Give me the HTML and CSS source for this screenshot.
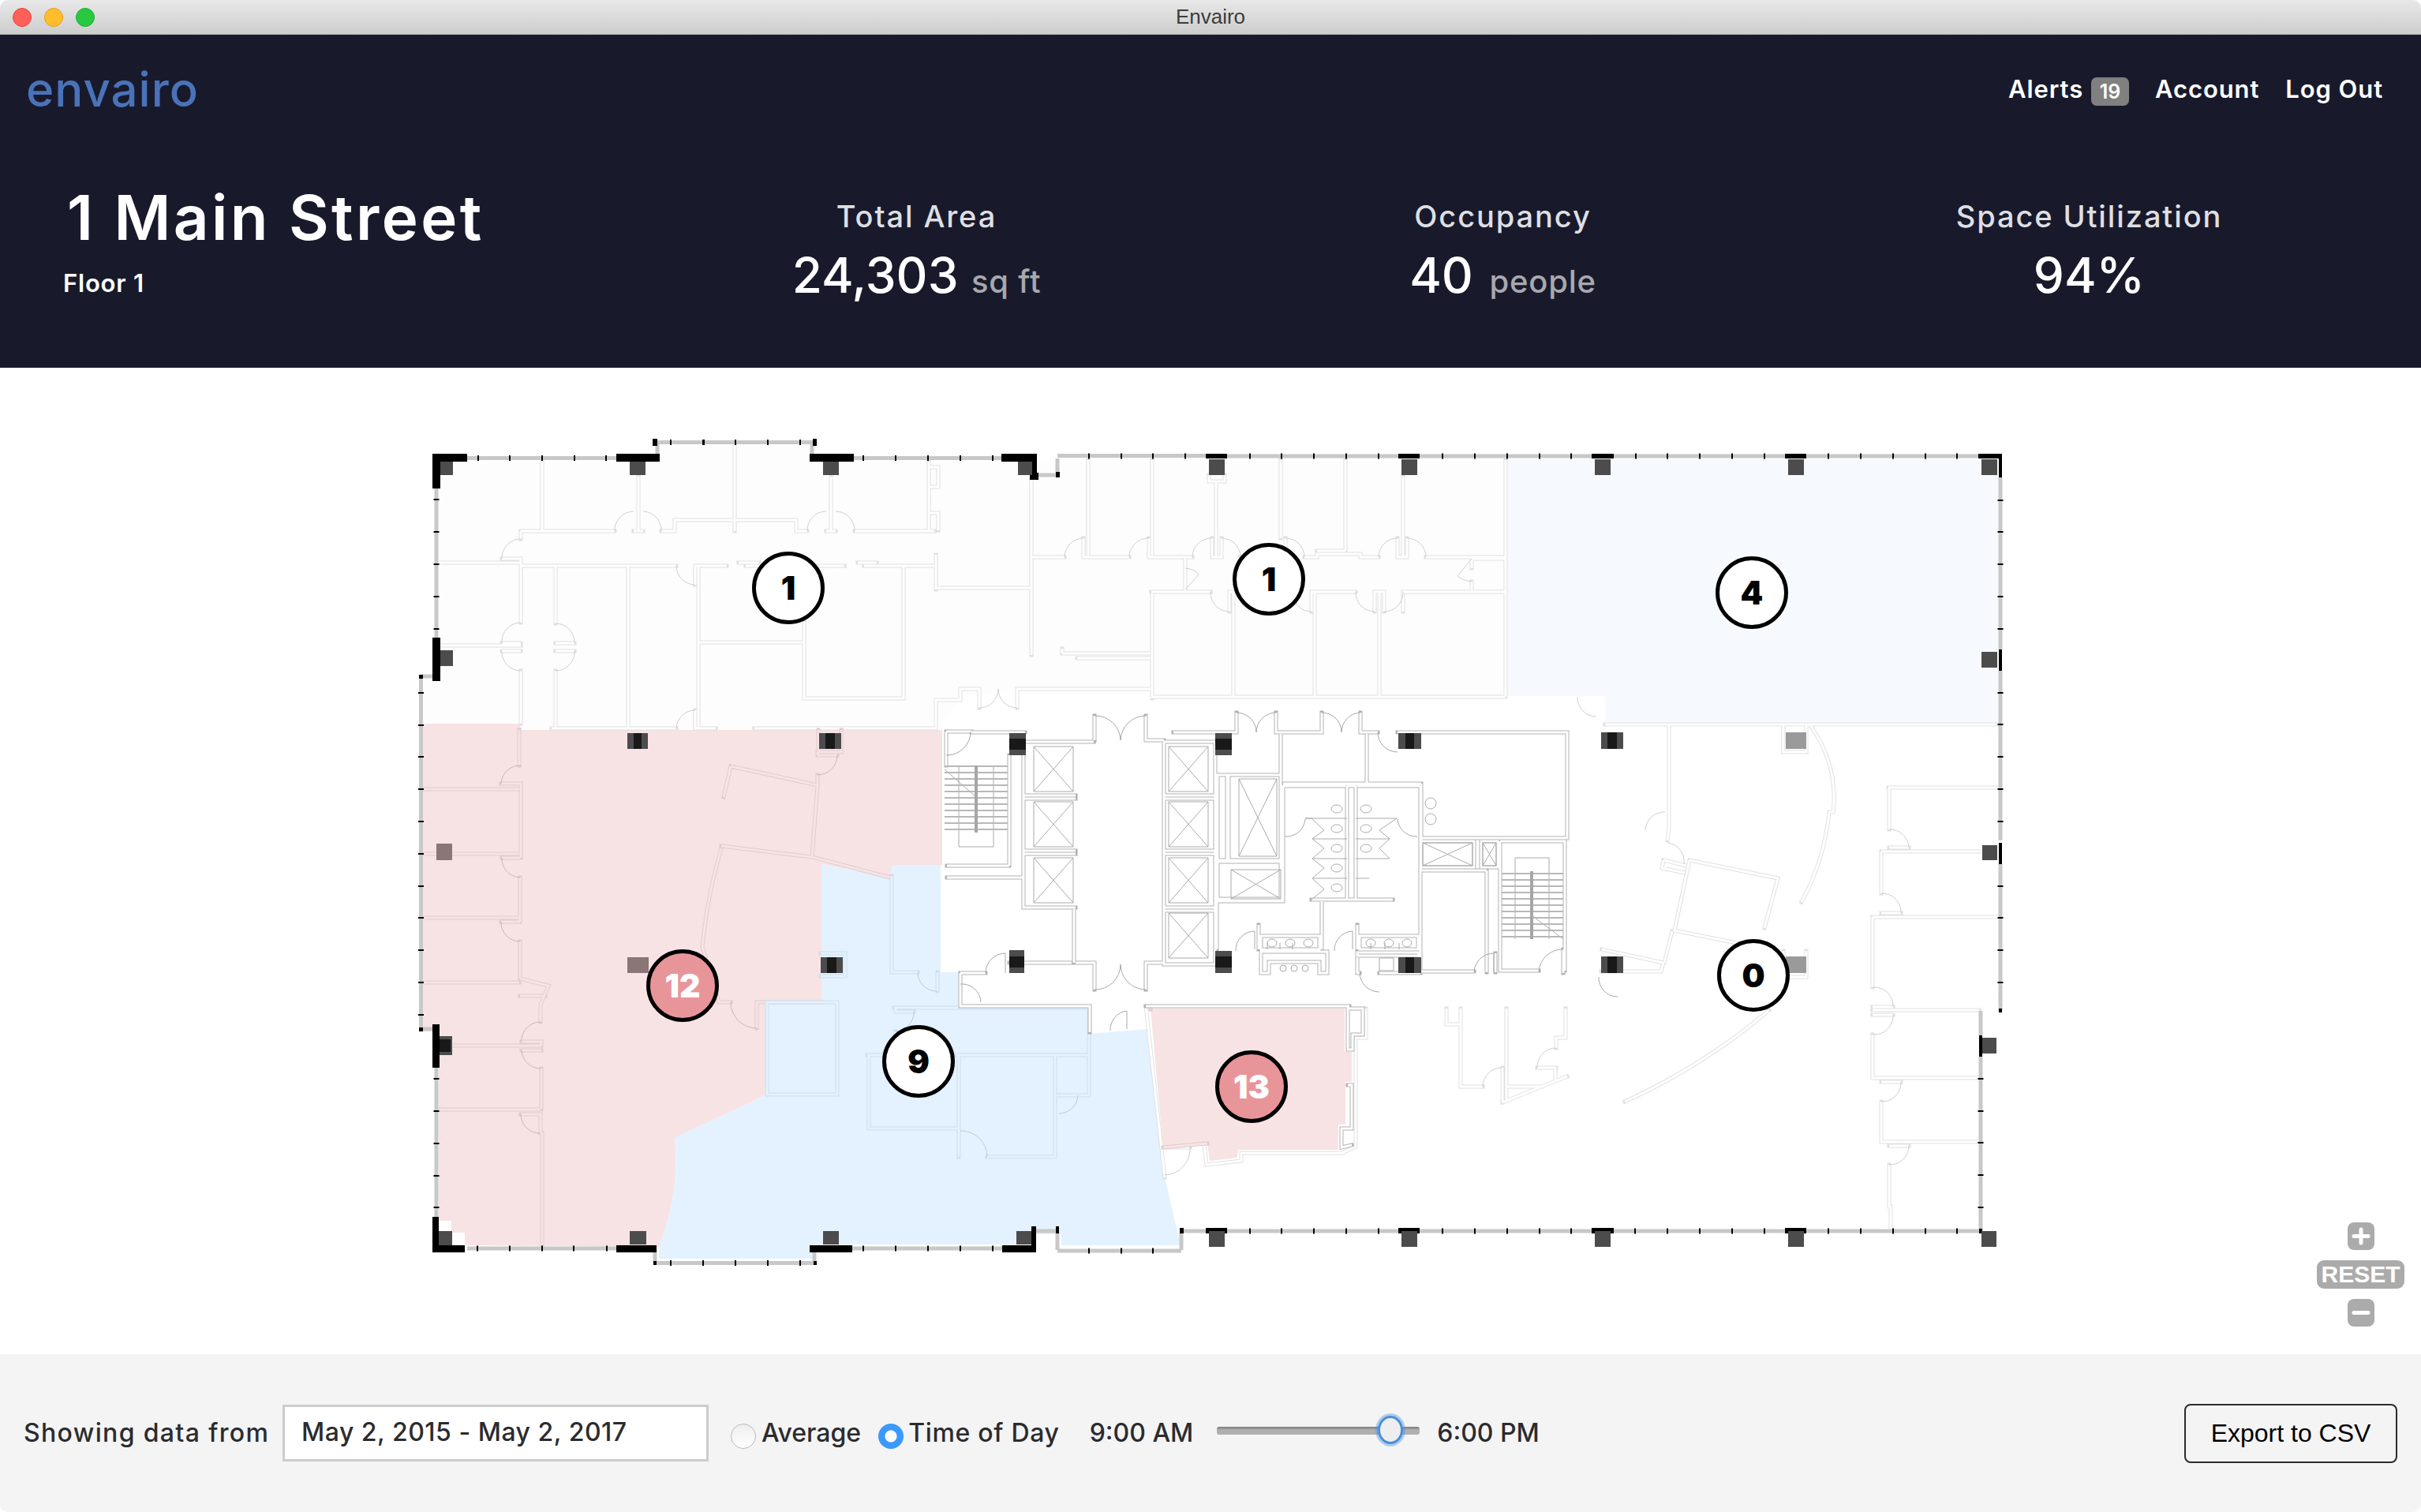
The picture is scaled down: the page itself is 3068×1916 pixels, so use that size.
FILE: index.html
```html
<!DOCTYPE html>
<html lang="en">
<head>
<meta charset="utf-8">
<title>Envairo</title>
<link rel="stylesheet" href="styles.css">
</head>
<body>
<div class="window">
  <div class="titlebar">
    <div class="lights"><span class="light red"></span><span class="light amber"></span><span class="light green"></span></div>
    <div class="window-title">Envairo</div>
  </div>
  <header class="header">
    <div class="topbar">
      <div class="logo">envairo</div>
      <nav class="nav">
        <a class="nav-item">Alerts <span class="badge">19</span></a>
        <a class="nav-item">Account</a>
        <a class="nav-item">Log Out</a>
      </nav>
    </div>
    <div class="summary">
      <div class="place">
        <h1 class="place-name">1 Main Street</h1>
        <div class="place-floor">Floor 1</div>
      </div>
      <div class="stat"><div class="stat-label">Total Area</div><div class="stat-value">24,303 <span class="unit">sq ft</span></div></div>
      <div class="stat"><div class="stat-label">Occupancy</div><div class="stat-value">40 <span class="unit unit-gap">people</span></div></div>
      <div class="stat"><div class="stat-label">Space Utilization</div><div class="stat-value">94%</div></div>
    </div>
  </header>
  <main class="map">
    <svg class="plan" viewBox="0 466 3068 1250" width="3068" height="1250" xmlns="http://www.w3.org/2000/svg">
      <defs>
        <path id="w-light" d="M687 583V672M660 673H779M809 604V673M803 673H815M838 673H855V659H1009V673H1023M931 563V673M1053 604V673M1047 673H1059M1083 673H1184M1177 585V673M1177 592H1189V617H1177M1177 650H1189V672M660 673V683M636 708H660V789M636 815H660M636 825H660M660 850V917M555 713H660M660 717H857M881 741V717H921M936 713H962M945 717H1070M1087 713H1111M1095 717H1184M1186 703V747M1186 745H1307M1307 608V830M704 717V790M704 815H728M704 825H728M704 850V923M558 818H660M796 717V923M885 717V923M885 814H1019M1019 788V885H1145V717M699 923H857M881 900V923H907M956 923H1186V887H1217V873H1241V897M1289 897V873H1459M1308 706H1349M1373 682V706H1431M1456 682V706H1511M1379 583V706M1460 583V706M1536 682V706H1548V682M1541 610V706M1532 602V610H1552V602M1572 706H1623M1623 583V682M1629 682V706M1653 706H1669V702H1724V706H1747M1669 698H1705M1705 583V698M1771 682V706H1783V682M1778 604V706M1807 706H1908M1459 750H1502V707M1502 750H1534M1558 775V750H1640M1563 750V883M1662 775V750H1718M1666 750V883M1742 775V750H1754V775M1748 750V883M1778 775V750H1865V737M1865 720V708H1908M1865 750H1908M1460 752V885M1461 883H1908M1346 828H1458M1365 834H1458M1908 583V883M1346 822V828M1290 745H1305M2034 918H2532M2115 918V1051L2113 1065M2141 1090L2253 1113L2236 1176M2141 1090L2122 1179L2205 1196M2108 1090L2137 1097M2108 1090L2106 1100L2135 1106M2119 1180L2109 1220M2030 1203L2108 1220L2105 1231H2029M2393 998H2533M2394 998V1051M2394 1074H2419M2384 1079H2512M2384 1079V1132M2384 1157H2409M2373 1162H2533M2373 1162V1251M2373 1276H2399M2373 1280H2508M2373 1286H2399M2373 1311V1366H2508M2384 1371H2409M2384 1396V1447H2508M2394 1452H2419M2394 1476V1529H2396V1559M2294 919Q2330 970 2323 1029H2318Q2312 1090 2283 1143M2242 1280Q2160 1350 2059 1396M2260 919V953H2289V919M2260 1205V1238H2289V1205M1476 1454H1508M1526 1449L1529 1476L1573 1471V1461H1701L1718 1453V1315H1731V1278M1833 1278V1298H1850M1851 1278V1377H1879M1904 1353V1397M1909 1278V1393M1909 1377H1953M1904 1397L1986 1364M1971 1353V1368M1948 1353H1972M1972 1328V1315H1984V1278M1452 1275L1476 1492"/>
        <path id="w-pink" d="M536 1000H658M658 925V970M635 993H660V1087M536 1082H658M636 1087H659M659 1112V1168M635 1168H659M659 1193V1240M536 1163H658M536 1245H658M659 1240L695 1249L685 1273V1295M659 1262H691M661 1320H686V1325M557 1325H686M661 1331H686M686 1354V1405M554 1406H685M660 1412H685V1436H687V1578M914 1075Q898 1130 892 1182L890 1200L911 1270H926M959 1303V1270H1041M926 971L1036 995L1029 1086L914 1072M926 971L917 1010M1036 957H1061M1036 953V957M1036 982V995M1037 925V953H1066V925M1029 1086L1128 1112M1458 1278V1279M1530 1449L1474 1454"/>
        <path id="w-blue" d="M972 1270H1061V1387H972ZM1130 1110V1232H1163M1188 1232V1256M1133 1277H1380V1388H1339M1135 1277V1282H1158M1135 1307V1320M1211 1337H1380M1099 1337H1122M1101 1337V1430H1214M1215 1338V1466M1251 1466H1337V1338M1040 1208H1071V1237H1040"/>
        <path id="w-core" d="M1199 927V970M1217 1233V1275H1381V1308M1231 928H1299M1199 927H1231M1297 940V1150H1363M1297 1008H1363M1297 1012H1363M1297 1078H1363M1297 1082H1363M1297 940H1386M1279 957V1097M1200 1097H1279M1200 1112H1297M1361 1152V1220M1279 1220H1358M1217 1233H1249M1363 1220H1387V1254M1452 1254V1220H1475M1387 907V938M1452 907V938H1475M1475 940V1222H1540M1475 940H1540V1222M1475 1008H1540M1475 1012H1540M1475 1078H1540M1475 1082H1540M1475 1150H1540M1475 1154H1540M1487 928H1567V903M1617 903V928H1675V903M1724 903V928H1746M1623 930V982M1771 928H1986V1062H1801V1100M1626 993H1731M1732 930V993H1801M1557 982H1623V1090H1557ZM1543 982H1555V1090H1543ZM1543 1092H1623V1139H1543ZM1626 995V1142H1542V1203M1626 996H1705M1720 996H1799M1707 996H1718V1140H1707ZM1662 1140H1765M1675 1142V1203M1801 1062V993M1800 996V1233M1884 1103V1232M1801 1103H1884M1801 1066H1868V1099H1801ZM1877 1066H1898V1099H1877ZM1901 1066H1983V1230M1901 1066V1230H1950M1801 1231H1868M1895 1208V1232M1981 1203V1233M1598 1186H1672V1203H1598ZM1723 1186H1797V1203H1723ZM1595 1172V1203M1720 1172V1203M1598 1206H1682V1233H1672V1219H1608V1233H1598ZM1720 1207H1798V1211H1720ZM1720 1213V1233H1723M1748 1233H1800M1452 1275H1710M1708 1278H1727V1311H1714V1330H1708ZM1708 1375H1713V1430H1700V1454L1713 1451"/>
      </defs>

      <polygon class="zone zone-pale" points="536,917 536,860 558,860 558,585 830,585 830,565 1030,565 1030,585 1910,585 1910,883 1459,883 1459,873 1289,873 1217,885 1186,925 658,925"/>
      <polygon class="zone zone-ice" points="1910,582 2532,582 2532,916 2034,916 2034,882 1910,882"/>
      <path class="zone zone-pink" d="M536 917H658L661 925H1194V1096H1131L1128 1112L1041 1095V1270H972V1387L855 1442Q862 1510 835 1580L589 1578V1562H572V1547H556V1353H548V1307H536ZM1458 1278H1704V1333H1713V1371H1705V1425H1696V1457H1569L1568 1467L1533 1471L1530 1449L1474 1454Z"/>
      <path class="zone zone-blue" d="M1041 1095L1128 1112L1131 1096H1192V1232H1217V1275H1380V1310L1455 1304L1476 1492L1496 1578H1345V1564H1313V1577H1030V1595H835V1580Q862 1510 855 1442L972 1387V1270H1041Z"/>

      <use href="#w-light" class="wall-out wall-out-light"/><use href="#w-light" class="wall-in"/>
      <use href="#w-pink" class="wall-out wall-out-pink"/><use href="#w-pink" class="wall-in wall-in-pink"/>
      <use href="#w-blue" class="wall-out wall-out-blue"/><use href="#w-blue" class="wall-in wall-in-blue"/>
      <use href="#w-core" class="wall-out wall-out-core"/><use href="#w-core" class="wall-in"/>

      <path class="door door-light" d="M779 673A24 24 0 0 1 803 648M815 648A24 24 0 0 1 838 673M1023 673A24 24 0 0 1 1047 648M1059 648A24 24 0 0 1 1083 673M660 683A24 24 0 0 0 636 708M857 717A24 24 0 0 0 880 741M660 789A24 24 0 0 0 636 815M636 825A24 24 0 0 0 660 850M704 790A24 24 0 0 1 728 815M728 825A24 24 0 0 1 704 850M857 923A24 24 0 0 1 881 900M1241 897A24 24 0 0 0 1265 873M1289 897A24 24 0 0 1 1265 873M1349 706A24 24 0 0 1 1373 682M1431 706A24 24 0 0 1 1456 682M1511 706A24 24 0 0 1 1536 682M1548 682A24 24 0 0 1 1572 706M1629 682A24 24 0 0 1 1653 706M1747 706A24 24 0 0 1 1771 682M1783 682A24 24 0 0 1 1807 706M1534 750A24 24 0 0 0 1558 775M1638 750A24 24 0 0 0 1662 775M1718 750A24 24 0 0 0 1742 775M1754 775A24 24 0 0 0 1778 750M1502 720Q1516 722 1519 728L1502 747M1865 708L1847 730Q1852 735 1865 737M2085 1052A24 24 0 0 1 2110 1029M2114 1068A24 24 0 0 1 2134 1095M2394 1051A24 24 0 0 1 2419 1074M2384 1132A24 24 0 0 1 2409 1157M2373 1251A24 24 0 0 1 2399 1276M2399 1286A24 24 0 0 1 2373 1311M2409 1371A24 24 0 0 1 2384 1396M2419 1452A24 24 0 0 1 2394 1476M1879 1377A24 24 0 0 1 1903 1353M1948 1353A24 24 0 0 1 1972 1328M1476 1489A33 33 0 0 0 1508 1453M1999 883A24 24 0 0 0 2023 908"/>
      <path class="door door-core" d="M1199 957A30 30 0 0 0 1230 927M1387 907A32 32 0 0 1 1420 938M1452 907A32 32 0 0 0 1420 938M1387 1254A32 32 0 0 0 1420 1222M1452 1254A32 32 0 0 1 1420 1222M1567 903A25 25 0 0 1 1592 928M1617 903A25 25 0 0 0 1592 928M1675 903A25 25 0 0 1 1700 928M1724 903A25 25 0 0 0 1700 928M1746 928A25 25 0 0 0 1771 953M1628 1060A24 24 0 0 0 1654 1038M1771 1038A24 24 0 0 0 1796 1060M1249 1233A25 25 0 0 1 1274 1208M1217 1247A24 24 0 0 1 1243 1270M1407 1306A24 24 0 0 1 1428 1281M1566 1205A24 24 0 0 1 1590 1180M1691 1205A24 24 0 0 1 1714 1180M1723 1233A25 25 0 0 0 1748 1257M1868 1231A25 25 0 0 1 1893 1208M1950 1232A30 30 0 0 1 1981 1203M2026 1238A24 24 0 0 0 2050 1263M1274 1208V1233M1428 1281V1304M1714 1180V1203M1590 1180V1203M1893 1208V1232"/>
      <path class="door door-pink" d="M660 970A24 24 0 0 0 635 993M636 1087A24 24 0 0 0 659 1112M635 1168A24 24 0 0 0 659 1193M686 1295A24 24 0 0 0 661 1320M661 1331A24 24 0 0 0 686 1354M660 1412A24 24 0 0 0 685 1436M926 1270A33 33 0 0 0 959 1303M1061 957A25 25 0 0 1 1036 982"/>
      <path class="door door-blue" d="M1163 1233A24 24 0 0 0 1187 1256M1158 1282A24 24 0 0 1 1135 1307M1217 1433A33 33 0 0 1 1251 1465M1366 1388A24 24 0 0 1 1342 1411"/>

      <path class="fixture" d="M1310 946H1360V1003H1310ZM1310 946L1360 1003M1360 946L1310 1003M1310 1016H1360V1073H1310ZM1310 1016L1360 1073M1360 1016L1310 1073M1310 1087H1360V1144H1310ZM1310 1087L1360 1144M1360 1087L1310 1144M1481 946H1531V1003H1481ZM1481 946L1531 1003M1531 946L1481 1003M1481 1016H1531V1073H1481ZM1481 1016L1531 1073M1531 1016L1481 1073M1481 1087H1531V1144H1481ZM1481 1087L1531 1144M1531 1087L1481 1144M1481 1157H1531V1214H1481ZM1481 1157L1531 1214M1531 1157L1481 1214M1570 987H1618V1085H1570ZM1570 987L1618 1085M1618 987L1570 1085M1560 1102H1623V1139H1560ZM1560 1102L1623 1139M1623 1102L1560 1139M1803 1068H1866V1097H1803ZM1803 1068L1866 1097M1866 1068L1803 1097M1879 1068H1896V1097H1879ZM1879 1068L1896 1097M1896 1068L1879 1097M1215 1055V1073H1259V1055M1920 1106V1087H1963V1106M1654 1037H1707M1718 1037H1770M1663 1063H1707M1718 1063H1761M1663 1088H1707M1718 1088H1761M1663 1113H1707M1718 1113H1735M1654 1037L1662 1037L1678 1052L1663 1063L1678 1075L1663 1088L1678 1100L1663 1113L1678 1127L1661 1141M1770 1037L1748 1052L1761 1063L1748 1075L1761 1088M1606 1195V1203M1622 1195V1203M1638 1195V1203M1737 1195V1203M1755 1195V1203M1773 1195V1203M1748 1214H1766V1230H1748ZM1197 975L1237 1010M1215 970V1055M1259 970V1055M1920 1106V1190M1963 1106V1190M1941 1160L1981 1190"/>
      <g class="fixture">
        <ellipse cx="1694" cy="1025" rx="7" ry="5"/><ellipse cx="1694" cy="1050" rx="7" ry="5"/><ellipse cx="1694" cy="1075" rx="7" ry="5"/><ellipse cx="1694" cy="1100" rx="7" ry="5"/><ellipse cx="1694" cy="1125" rx="7" ry="5"/>
        <ellipse cx="1731" cy="1025" rx="7" ry="5"/><ellipse cx="1731" cy="1050" rx="7" ry="5"/><ellipse cx="1731" cy="1075" rx="7" ry="5"/>
        <ellipse cx="1813" cy="1018" rx="7" ry="7"/><ellipse cx="1813" cy="1038" rx="7" ry="7"/>
        <ellipse cx="1612" cy="1195" rx="6" ry="5"/><ellipse cx="1635" cy="1195" rx="6" ry="5"/><ellipse cx="1658" cy="1195" rx="6" ry="5"/>
        <ellipse cx="1737" cy="1195" rx="6" ry="5"/><ellipse cx="1760" cy="1195" rx="6" ry="5"/><ellipse cx="1783" cy="1195" rx="6" ry="5"/>
        <ellipse cx="1626" cy="1227" rx="4" ry="4"/><ellipse cx="1640" cy="1227" rx="4" ry="4"/><ellipse cx="1654" cy="1227" rx="4" ry="4"/>
      </g>
      <line class="treads treads-a" x1="1237" y1="970" x2="1237" y2="1055"/>
      <line class="treads treads-b" x1="1942" y1="1106" x2="1942" y2="1190"/>
      <path class="spine" d="M1237 970V1055M1941 1104V1190"/>

      <path class="win" d="M592 580.5H781M829 560.5H1032M1082 580.5H1269M1340 577.5H1528M1555 578H1772M1799 578H2017M2045 578H2262M2289 578H2507M553 619V808M533.5 860V1302M553 1353V1542M2535 605V823M2535 850V1065M2535 1095V1281M2510 1281V1312M2510 1339V1559M592 1582H781M1080 1582H1270M1340 1585H1497M2045 1560H2262M2289 1560H2508M1497 1560H2017M829 1600.5H1032M1340 581V600M1316 602H1340M833 563V576M1029 563V576M534 857H549M534 1304H549M1313 1560H1342M1340 1562V1584M1497 1562V1584M830 1583V1598M1032 1583V1598"/>
      <path class="tick tick-h" d="M605 580.5H607M645 580.5H647M686 580.5H688M727 580.5H729M767 580.5H769M849 560.5H851M890 560.5H893M931 560.5H933M972 560.5H974M1013 560.5H1015M1093 580.5H1095M1134 580.5H1136M1175 580.5H1177M1216 580.5H1218M1257 580.5H1259M1379 578H1381M1420 578H1422M1460 578H1462M1501 578H1503M1583 578H1585M1623 578H1625M1664 578H1666M1705 578H1707M1746 578H1748M1827 578H1829M1868 578H1870M1909 578H1911M1950 578H1952M1990 578H1992M2072 578H2074M2112 578H2114M2153 578H2155M2194 578H2196M2235 578H2237M2316 578H2318M2357 578H2359M2398 578H2400M2439 578H2441M2479 578H2481M1583 1560H1585M1623 1560H1625M1664 1560H1666M1705 1560H1707M1746 1560H1748M1827 1560H1829M1868 1560H1870M1909 1560H1911M1950 1560H1952M1990 1560H1992M2071 1560H2073M2112 1560H2114M2153 1560H2155M2194 1560H2196M2235 1560H2237M2316 1560H2318M2357 1560H2359M2398 1560H2400M2439 1560H2441M2479 1560H2481M604 1582H606M645 1582H647M686 1582H688M726 1582H728M768 1582H770M849 1600.5H851M890 1600.5H892M931 1600.5H933M972 1600.5H974M1013 1600.5H1015M1093 1582H1095M1134 1582H1136M1175 1582H1177M1216 1582H1218M1257 1582H1259M1379 1585H1381M1420 1585H1422M1460 1585H1462"/>
      <path class="tick tick-v" d="M553 632V634M553 673V675M553 714V716M553 755V757M553 796V798M533.5 877V879M533.5 918V920M533.5 958V960M533.5 999V1001M533.5 1040V1042M533.5 1081V1083M533.5 1122V1124M533.5 1162V1164M533.5 1203V1205M533.5 1244V1246M533.5 1285V1287M553 1366V1368M553 1407V1409M553 1448V1450M553 1489V1491M553 1529V1531M2535 633V635M2535 673V675M2535 714V716M2535 755V757M2535 796V798M2535 877V879M2535 917V919M2535 958V960M2535 999V1001M2535 1040V1042M2535 1122V1124M2535 1162V1164M2535 1203V1205M2535 1244V1246M2510 1366V1368M2510 1407V1409M2510 1447V1449M2510 1488V1490M2510 1529V1531"/>

      <g class="blocks">
        <path d="M548 575H592V585H558V619H548ZM781 575H836V585H781ZM1026 575H1082V585H1026ZM1269 575H1314V605H1305V585H1269ZM1305 599H1316V608H1305ZM1528 575H1555V581H1528ZM1772 575H1799V581H1772ZM2017 575H2045V581H2017ZM2262 575H2289V581H2262ZM2507 575H2537V605H2533V581H2507ZM548 808H558V863H548ZM548 1298H557V1353H548ZM548 1542H556V1578H589V1587H548ZM781 1578H832V1587H781ZM1026 1578H1080V1587H1026ZM1270 1578H1307V1554H1313V1587H1270ZM2533 823H2537V850H2533ZM2533 1068H2537V1095H2533ZM2508 1312H2512V1339H2508ZM2017 1556H2045V1563H2017ZM2262 1556H2289V1563H2262ZM1528 1556H1555V1563H1528ZM1772 1556H1799V1563H1772ZM827 556H833V565H827ZM1030 556H1035V565H1030ZM531 855H536V860H531ZM531 1302H536V1307H531ZM1338 1554H1342V1563H1338ZM1495 1556H1500V1563H1495ZM828 1598H832V1603H828ZM1031 1598H1035V1603H1031ZM2508 1557H2512V1563H2508ZM2533 1278H2537V1283H2533ZM1338 598H1343V605H1338Z"/>
      </g>

      <g class="col">
        <rect x="558" y="585" width="16" height="17"/><rect x="798" y="585" width="20" height="17"/><rect x="1043" y="585" width="20" height="17"/><rect x="1290" y="585" width="18" height="17"/><rect x="1532" y="582" width="20" height="20"/><rect x="1776" y="582" width="20" height="20"/><rect x="2021" y="582" width="20" height="20"/><rect x="2266" y="582" width="20" height="20"/><rect x="2511" y="582" width="20" height="20"/><rect x="2511" y="826" width="20" height="20"/><rect x="558" y="824" width="16" height="20"/><rect x="2512" y="1071" width="19" height="19"/><rect x="2512" y="1315" width="18" height="20"/><rect x="2511" y="1560" width="19" height="20"/><rect x="2021" y="1560" width="20" height="20"/><rect x="2266" y="1560" width="20" height="20"/><rect x="1776" y="1560" width="20" height="20"/><rect x="1532" y="1560" width="20" height="20"/><rect x="556" y="1560" width="17" height="18"/><rect x="798" y="1560" width="21" height="17"/><rect x="1043" y="1560" width="20" height="17"/><rect x="1288" y="1560" width="19" height="17"/>
        <rect x="795" y="929" width="26" height="20"/><rect x="1038" y="929" width="28" height="20"/><rect x="1279" y="929" width="21" height="28"/><rect x="1540" y="929" width="21" height="28"/><rect x="1772" y="929" width="29" height="20"/><rect x="2029" y="928" width="28" height="21"/><rect x="2029" y="1212" width="28" height="21"/><rect x="1040" y="1213" width="28" height="20"/><rect x="1279" y="1204" width="19" height="29"/><rect x="1540" y="1205" width="21" height="28"/><rect x="1772" y="1213" width="29" height="20"/><rect x="557" y="1313" width="16" height="24"/>
      </g>
      <g class="col-core">
        <rect x="803" y="929" width="10" height="20"/><rect x="1046" y="929" width="12" height="20"/><rect x="1279" y="936" width="21" height="14"/><rect x="1540" y="936" width="21" height="14"/><rect x="1781" y="929" width="11" height="20"/><rect x="2037" y="928" width="12" height="21"/><rect x="2037" y="1212" width="12" height="21"/><rect x="1048" y="1213" width="12" height="20"/><rect x="1279" y="1212" width="19" height="14"/><rect x="1540" y="1212" width="21" height="14"/><rect x="1781" y="1213" width="11" height="20"/><rect x="557" y="1317" width="14" height="16"/>
      </g>
      <g class="col-pale">
        <rect x="2263" y="928" width="26" height="21"/><rect x="2263" y="1212" width="26" height="21"/>
      </g>
      <g class="col-rose">
        <rect x="795" y="1213" width="27" height="20"/><rect x="553" y="1069" width="20" height="21"/>
      </g>

      <g class="pins">
        <g class="pin"><circle cx="999" cy="745" r="43.5"/><text class="pin-num" x="999" y="760">1</text></g>
        <g class="pin"><circle cx="1608" cy="734" r="43.5"/><text class="pin-num" x="1608" y="749">1</text></g>
        <g class="pin"><circle cx="2220" cy="751" r="43.5"/><text class="pin-num" x="2220" y="766">4</text></g>
        <g class="pin"><circle cx="2222" cy="1236" r="43.5"/><text class="pin-num" x="2222" y="1251">0</text></g>
        <g class="pin"><circle cx="1164" cy="1345" r="43.5"/><text class="pin-num" x="1164" y="1360">9</text></g>
        <g class="pin pin-alert"><circle cx="865" cy="1249" r="43.5"/><text class="pin-num" x="865" y="1264">12</text></g>
        <g class="pin pin-alert"><circle cx="1586" cy="1377" r="43.5"/><text class="pin-num" x="1586" y="1392">13</text></g>
      </g>
    </svg>
    <div class="zoom-controls">
      <button class="zoom-btn" aria-label="Zoom in"><svg viewBox="0 0 34 35" width="34" height="35"><path class="zoom-glyph" d="M17 9V26M8 17.5H26"/></svg></button>
      <button class="zoom-reset">RESET</button>
      <button class="zoom-btn" aria-label="Zoom out"><svg viewBox="0 0 34 35" width="34" height="35"><path class="zoom-glyph" d="M8 17.5H26"/></svg></button>
    </div>
  </main>
  <footer class="footer">
    <span class="label">Showing data from</span>
    <div class="range">May 2, 2015 - May 2, 2017</div>
    <label class="radio-row"><span class="radio"></span>Average</label>
    <label class="radio-row radio-row-on"><span class="radio radio-on"></span><span class="tod">Time of Day</span></label>
    <span class="time time-start">9:00 AM</span>
    <div class="slider"><div class="slider-track"></div><div class="slider-thumb"></div></div>
    <span class="time">6:00 PM</span>
    <button class="export">Export to CSV</button>
  </footer>
</div>
</body>
</html>
```

FILE: styles.css
```css
* { box-sizing: border-box; }
html, body { margin: 0; height: 100%; background: #fff; }
body { font-family: Inter, "Liberation Sans", sans-serif; }

.window { width: 3068px; height: 1916px; display: flex; flex-direction: column; border-radius: 10px; overflow: hidden; }

.titlebar { height: 44px; flex: none; display: flex; align-items: center; justify-content: center; position: relative; background: linear-gradient(#e8e8e8, #cdcdcd); border-bottom: 1px solid #b4b4b4; }
.lights { position: absolute; left: 16px; top: 10px; display: flex; gap: 16px; }
.light { width: 24px; height: 24px; border-radius: 50%; }
.red { background: #ff5f57; border: 1px solid #e2463f; }
.amber { background: #ffbd2e; border: 1px solid #e1a116; }
.green { background: #28c940; border: 1px solid #14ae2c; }
.window-title { font: 26px "Liberation Sans", sans-serif; color: #3c3c3c; }

.header { height: 422px; flex: none; background: #181a2c; color: #fff; display: flex; flex-direction: column; }
.topbar { height: 146px; display: flex; justify-content: space-between; padding: 0 48px 0 33px; }
.logo { font-size: 60px; font-weight: 500; line-height: 60px; margin-top: 39px; color: #4a72b8; letter-spacing: 1px; }
.nav { display: flex; gap: 33px; margin-top: 50px; align-items: flex-start; }
.nav-item { font-size: 31px; font-weight: 600; line-height: 38px; letter-spacing: 0.9px; display: flex; align-items: flex-start; gap: 10px; }
.badge { width: 48px; height: 36px; margin-top: 4px; border-radius: 7px; background: #808080; font-size: 25px; font-weight: 600; line-height: 36px; letter-spacing: 0; text-align: center; }

.summary { display: grid; grid-template-columns: 790px 743px 743px 743px; }
.place { padding-left: 80px; padding-top: 39px; }
.place-name { margin: 0 0 0 5px; font-size: 78px; font-weight: 600; line-height: 94px; letter-spacing: 3.4px; }
.place-floor { font-size: 31px; font-weight: 600; line-height: 38px; letter-spacing: 0.8px; margin-top: 17px; }
.stat { text-align: center; padding-top: 61px; }
.stat-label { font-size: 38px; font-weight: 500; line-height: 46px; letter-spacing: 1.9px; color: #dfdfe2; }
.stat-value { font-size: 62px; font-weight: 500; line-height: 76px; margin-top: 14px; }
.unit { font-size: 40px; font-weight: 500; letter-spacing: 0.8px; color: #a8a8ae; }
.unit-gap { margin-left: 4px; }

.map { flex: 1; position: relative; background: #fff; }
.plan { display: block; }
.zone-pale { fill: #fdfdfe; }
.zone-ice { fill: #f6faff; }
.zone-pink { fill: #f7e3e4; }
.zone-blue { fill: #e3f2fe; }

.wall-out, .wall-in { fill: none; }
.wall-out { stroke-width: 5; stroke-linecap: square; stroke-linejoin: miter; }
.wall-in { stroke-width: 3; stroke: #fff; }
.wall-out-light { stroke: #e0e0e0; }
.wall-out-pink { stroke: #e0cbcd; }
.wall-in-pink { stroke: #f7e3e4; }
.wall-out-blue { stroke: #cdddea; }
.wall-in-blue { stroke: #e3f2fe; }
.wall-out-core { stroke: #b2b2b2; }

.door { fill: none; stroke-width: 1; }
.door-light { stroke: #cfcfcf; }
.door-core { stroke: #a8a8a8; }
.door-pink { stroke: #cdb4b7; }
.door-blue { stroke: #b8cbdb; }
.fixture { fill: none; stroke: #aaa; stroke-width: 1; }

.treads { stroke: #b8b8b8; stroke-dasharray: 2 6; }
.treads-a { stroke-width: 80; }
.treads-b { stroke-width: 78; }
.spine { fill: none; stroke: #a6a6a6; stroke-width: 4; }

.win { fill: none; stroke: #c8c8c8; stroke-width: 5; }
.tick { fill: none; stroke: #000; }
.tick-h { stroke-width: 7; }
.tick-v { stroke-width: 7; }
.blocks { fill: #000; }
.col { fill: #4c4c4c; }
.col-core { fill: #191919; }
.col-pale { fill: #9a9a9a; }
.col-rose { fill: #8a7677; }

.pin circle { fill: #fff; stroke: #000; stroke-width: 5; }
.pin-num { font-family: Inter, sans-serif; font-size: 41px; font-weight: 900; text-anchor: middle; fill: #000; }
.pin-alert circle { fill: #e8959a; }
.pin-alert .pin-num { fill: #fff; }

.zoom-controls { position: absolute; right: 21px; top: 1083px; width: 111px; display: flex; flex-direction: column; align-items: center; gap: 13px; }
.zoom-btn { width: 34px; height: 35px; padding: 0; border: 0; border-radius: 8px; background: #ababab; display: block; }
.zoom-btn svg { display: block; }
.zoom-glyph { fill: none; stroke: #fff; stroke-width: 5; stroke-linecap: round; }
.zoom-reset { width: 111px; height: 36px; padding: 0; border: 0; border-radius: 9px; background: #ababab; color: #fff; font: bold 30px/36px "Liberation Sans", sans-serif; }

.footer { height: 200px; flex: none; background: #f4f4f4; display: flex; align-items: center; padding: 0 30px; color: #2b2b2e; font-size: 32px; font-weight: 500; }
.label { width: 328px; flex: none; letter-spacing: 1.35px; margin-top: -2px; }
.range { width: 540px; height: 72px; flex: none; background: #fff; border: 3px solid #ccc; padding-left: 21px; line-height: 64px; letter-spacing: 0.5px; }
.radio-row { display: flex; align-items: center; gap: 7px; margin-left: 28px; margin-top: -2px; }
.radio-row-on { margin-left: 22px; gap: 6px; }
.tod { letter-spacing: 0.7px; }
.radio { width: 32px; height: 32px; flex: none; border-radius: 50%; background: linear-gradient(#eee, #fff); border: 1px solid #b9b9b9; margin-top: 10px; }
.radio-on { border: 0; background: radial-gradient(circle, #fff 0 7px, #3b99fc 8px); }
.time { margin-top: -2px; }
.time-start { margin-left: 38px; }
.slider { width: 257px; height: 40px; flex: none; position: relative; margin: -6px 22px 0 30px; }
.slider-track { position: absolute; left: 0; right: 0; top: 15px; height: 10px; border-radius: 3px; background: linear-gradient(#777, #b0b0b0 40%, #b0b0b0); }
.slider-thumb { position: absolute; left: 204px; top: 1px; width: 32px; height: 36px; border-radius: 50%; background: #eee; border: 3px solid #4a90d9; box-shadow: 0 0 0 3px rgba(74, 144, 226, 0.4); }
.export { margin-left: auto; width: 270px; height: 75px; flex: none; margin-right: 0; border: 2px solid #2b2b2b; border-radius: 8px; background: #f4f4f4; color: #000; font: 32px "Liberation Sans", sans-serif; padding: 0; }
```
